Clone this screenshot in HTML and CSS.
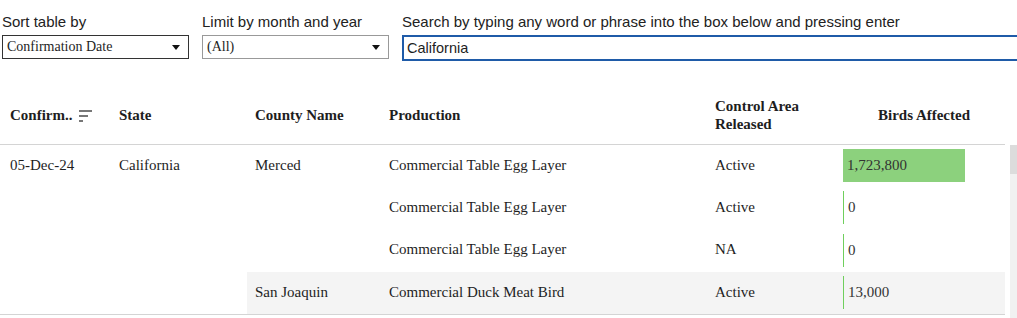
FILE: index.html
```html
<!DOCTYPE html>
<html lang="en">
<head>
    <meta charset="UTF-8">
    <title>Confirmed Cases</title>
    <link rel="stylesheet" href="styles.css">
</head>
<body>
    <div class="filters">
        <div class="filter sort">
            <label>Sort table by</label>
            <div class="dropdown dark">Confirmation Date<span class="arrow"></span></div>
        </div>
        <div class="filter month">
            <label>Limit by month and year</label>
            <div class="dropdown">(All)<span class="arrow"></span></div>
        </div>
        <div class="filter search">
            <label>Search by typing any word or phrase into the box below and pressing enter</label>
            <div class="searchbox">California</div>
        </div>
    </div>

    <div class="wrap">
        <div class="table">
            <div class="row head">
                <div class="cell">Confirm.. 
                    <svg class="sorticon" width="14" height="12" viewBox="0 0 14 12">
                        <rect x="0" y="0" width="13" height="2" fill="#777"/>
                        <rect x="0" y="5" width="9" height="2" fill="#777"/>
                        <rect x="0" y="10" width="4" height="2" fill="#777"/>
                    </svg>
                </div>
                <div class="cell">State</div>
                <div class="cell">County Name</div>
                <div class="cell">Production</div>
                <div class="cell">Control Area<br>Released</div>
                <div class="cell center">Birds Affected</div>
            </div>
            <div class="row">
                <div class="cell">05-Dec-24</div>
                <div class="cell">California</div>
                <div class="cell">Merced</div>
                <div class="cell">Commercial Table Egg Layer</div>
                <div class="cell">Active</div>
                <div class="cell birds"><div class="bar" style="width: 122px;">1,723,800</div></div>
            </div>
            <div class="row">
                <div class="cell"></div>
                <div class="cell"></div>
                <div class="cell"></div>
                <div class="cell">Commercial Table Egg Layer</div>
                <div class="cell">Active</div>
                <div class="cell birds"><div class="bar zero">0</div></div>
            </div>
            <div class="row tall">
                <div class="cell"></div>
                <div class="cell"></div>
                <div class="cell"></div>
                <div class="cell">Commercial Table Egg Layer</div>
                <div class="cell">NA</div>
                <div class="cell birds"><div class="bar zero">0</div></div>
            </div>
            <div class="row last">
                <div class="cell"></div>
                <div class="cell"></div>
                <div class="cell hl">San Joaquin</div>
                <div class="cell hl">Commercial Duck Meat Bird</div>
                <div class="cell hl">Active</div>
                <div class="cell birds hl"><div class="bar zero">13,000</div></div>
            </div>
        </div>
        <div class="scrollbar"><div class="thumb"></div></div>
    </div>
</body>
</html>
```

FILE: styles.css
```css
body {
    margin: 0;
    font-family: "Liberation Serif", "Times New Roman", serif;
    font-size: 15px;
    color: #1e1e1e;
    background: #fff;
    overflow: hidden;
}
.filters {
    display: flex;
    padding: 12px 0 0 2px;
    height: 78px;
}
.filter label {
    display: block;
    font-family: "Liberation Sans", Arial, sans-serif;
    font-size: 15px;
    color: #222;
    height: 21px;
    line-height: 19px;
}
.sort {
    width: 200px;
}
.month {
    width: 200px;
}
.search {
    flex: 1;
}
.dropdown {
    position: relative;
    width: 187px;
    height: 24px;
    box-sizing: border-box;
    border: 1px solid #999;
    font-size: 14px;
    line-height: 22px;
    padding-left: 4px;
    margin-top: 2px;
}
.dropdown.dark {
    border-color: #333;
}
.arrow {
    position: absolute;
    right: 8px;
    top: 9px;
    border-left: 4px solid transparent;
    border-right: 4px solid transparent;
    border-top: 5px solid #111;
}
.searchbox {
    height: 26px;
    box-sizing: border-box;
    border: 2px solid #1f5ba8;
    border-right: none;
    margin-top: 2px;
    font-family: "Liberation Sans", Arial, sans-serif;
    font-size: 14.5px;
    line-height: 22px;
    padding-left: 3px;
}
.wrap {
    display: flex;
}
.table {
    width: 1005px;
}
.row {
    display: grid;
    grid-template-columns: 111px 136px 134px 326px 128px 170px;
    height: 42px;
    align-items: center;
}
.row.tall {
    height: 43px;
}
.row.head {
    height: 54px;
    border-bottom: 1px solid #d4d4d4;
    font-weight: bold;
    line-height: 18px;
}
.row.head .cell {
    padding-bottom: 4px;
}
.row.last {
    border-bottom: 1px solid #d4d4d4;
}
.cell {
    padding-left: 8px;
    height: 100%;
    display: flex;
    align-items: center;
    box-sizing: border-box;
}
.cell:first-child {
    padding-left: 10px;
}
.row:not(.head) .cell {
    padding-bottom: 2px;
}
.cell.center {
    justify-content: center;
}
.sorticon {
    margin-left: 6px;
    margin-top: 2px;
}
.hl {
    background: #f4f4f4;
}
.row .cell.birds {
    padding-bottom: 1px;
}
.bar {
    height: 33px;
    background: #8cd17d;
    color: #333;
    line-height: 33px;
    padding-left: 4px;
    box-sizing: border-box;
}
.bar.zero {
    background: none;
    border-left: 1px solid #6fcf5c;
}
.scrollbar {
    width: 8px;
    margin-left: 5px;
    height: 180px;
    margin-top: 55px;
    background: #f1f1f1;
}
.thumb {
    height: 29px;
    background: #dcdcdc;
}
```
